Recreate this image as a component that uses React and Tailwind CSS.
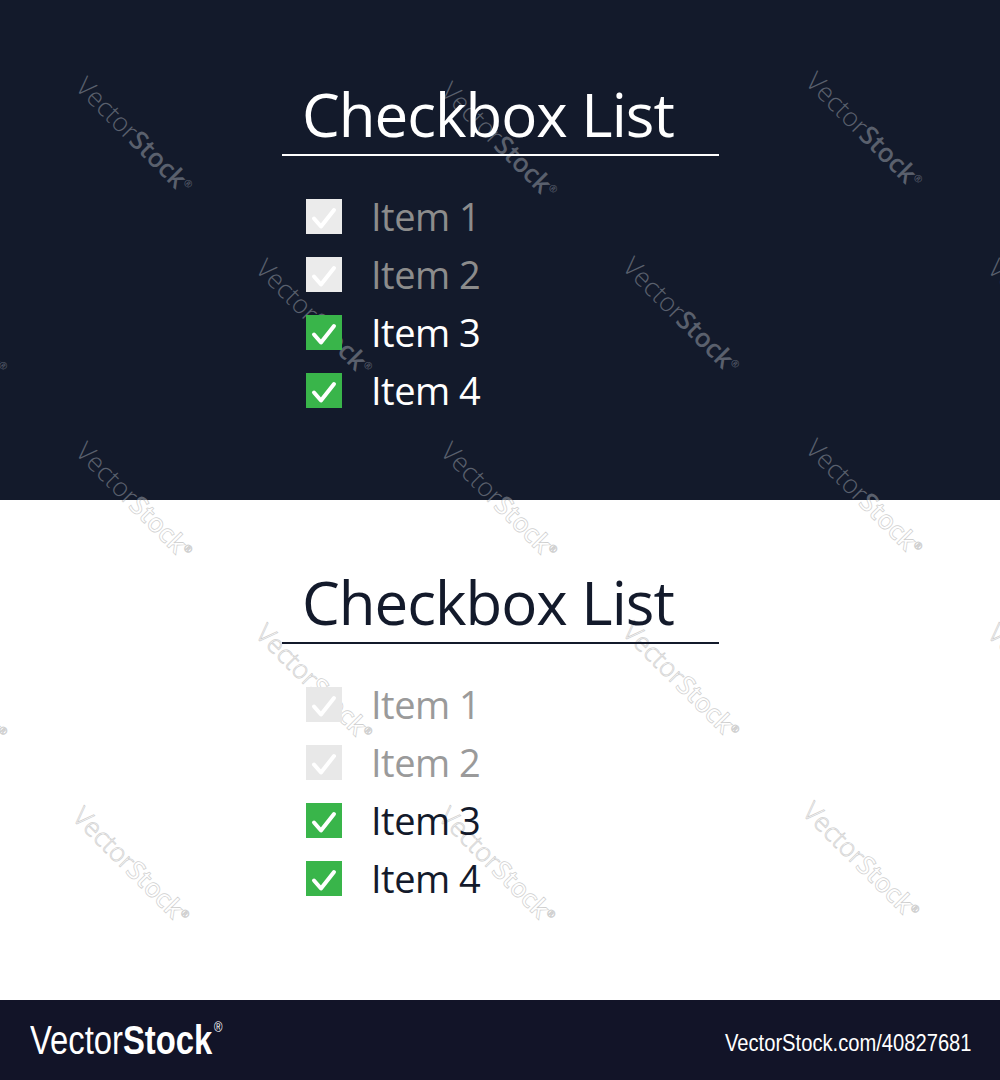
import { Fragment } from "react";

const items = [
  { label: "Item 1", done: false },
  { label: "Item 2", done: false },
  { label: "Item 3", done: true },
  { label: "Item 4", done: true },
];

// stamp centres across the 1000x1000 artboard
const stamps = [
  [135, 135], [500, 140], [865, 130],
  [-50, 317], [315, 317], [682, 315], [1047, 317],
  [135, 500], [500, 500], [865, 497],
  [-50, 682], [315, 682], [682, 680], [1047, 682],
  [132, 865], [498, 865], [862, 860],
];

function Stamps({ offset, dark }) {
  return (
    <div className="pointer-events-none absolute inset-0">
      {stamps.map(([x, y], i) => (
        <div
          key={i}
          className={
            "absolute -translate-x-1/2 -translate-y-1/2 rotate-45 whitespace-nowrap font-['Open_Sans',sans-serif] text-[26px] leading-none " +
            (dark
              ? "text-[#5a606d]"
              : "text-white [-webkit-text-stroke:0.7px_#cfcfcf]")
          }
          style={{ left: x, top: y - offset }}>
          <span className="font-light">Vector</span>
          <span className="font-semibold">Stock</span>
          <span className="align-super text-[10px]">®</span>
        </div>
      ))}
    </div>
  );
}

function Check({ on, tone }) {
  const box = on ? "bg-[#39b54a]" : tone === "dark" ? "bg-[#ebebeb]" : "bg-[#e8e8e8]";
  return (
    <div className={"h-[35px] w-[36px] shrink-0 " + box}>
      <svg viewBox="0 0 36 35" className="h-full w-full">
        <path
          d="M8 19.5 L15 27.5 L28 11"
          fill="none"
          stroke="#fff"
          strokeWidth="4"
          strokeLinecap="round"
          strokeLinejoin="round"
        />
      </svg>
    </div>
  );
}

function Panel({ tone }) {
  const dark = tone === "dark";
  return (
    <section
      className={
        "relative h-[500px] overflow-hidden " +
        (dark ? "bg-[#131a2b] pt-[84px]" : "bg-white pt-[72px]")
      }>
      <Stamps offset={dark ? 0 : 500} dark={dark} />
      <div className="relative ml-[282px] w-[437px] font-['Open_Sans',sans-serif]">
        <h1
          className={
            "pl-[20px] text-[60px] leading-none tracking-[-1px] " +
            (dark ? "text-white" : "text-[#131a2b]")
          }>
          Checkbox List
        </h1>
        <div className={"mt-[10px] h-[2px] " + (dark ? "bg-white" : "bg-[#131a2b]")} />
        <ul className="mt-[43px] flex flex-col gap-[23px] pl-[24px]">
          {items.map((it) => (
            <li key={it.label} className="flex h-[35px] items-center gap-[29px]">
              <Check on={it.done} tone={tone} />
              <span
                className={
                  "text-[38px] leading-[35px] tracking-[-0.5px] " +
                  (it.done
                    ? dark
                      ? "text-white"
                      : "text-[#131a2b]"
                    : dark
                      ? "text-[#8c8c8c]"
                      : "text-[#9a9a9a]")
                }>
                {it.label}
              </span>
            </li>
          ))}
        </ul>
      </div>
    </section>
  );
}

export default function App() {
  return (
    <div className="w-[1000px] bg-white">
      <Panel tone="dark" />
      <Panel tone="light" />
      <footer className="flex h-[80px] items-center justify-between bg-[#121428] pl-[30px] pr-[28px] font-['Liberation_Sans',sans-serif] text-white">
        <div className="flex origin-left scale-x-[0.82] items-start text-[40px] leading-none">
          <span className="font-light">Vector</span>
          <span className="font-bold">Stock</span>
          <span className="ml-[2px] text-[14px]">®</span>
        </div>
        <div className="mt-[6px] origin-right scale-x-[0.84] text-[24px] leading-none">
          VectorStock.com/40827681
        </div>
      </footer>
    </div>
  );
}
